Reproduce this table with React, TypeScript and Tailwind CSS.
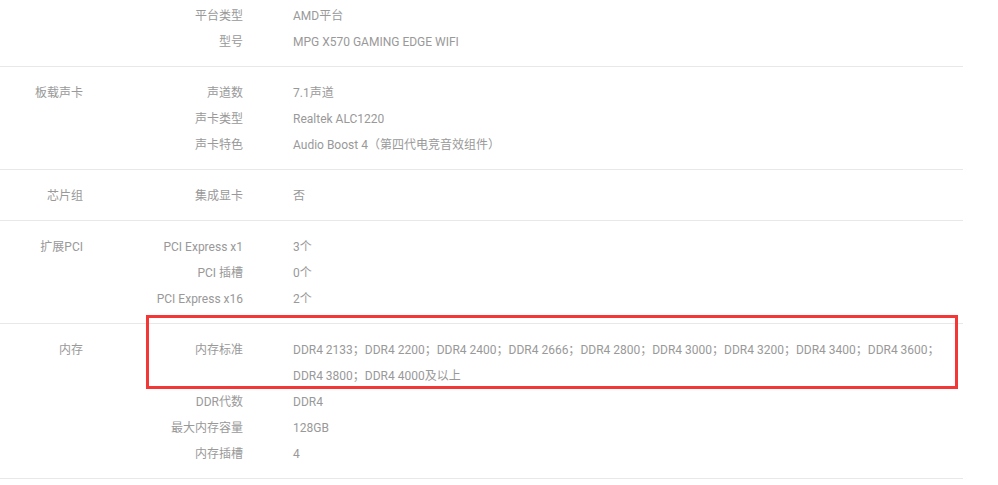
import React from "react";

type Row = { k: string; v: React.ReactNode };
type Section = { group: string; rows: Row[] };

const ddr = [
  "DDR4 2133；",
  "DDR4 2200；",
  "DDR4 2400；",
  "DDR4 2666；",
  "DDR4 2800；",
  "DDR4 3000；",
  "DDR4 3200；",
  "DDR4 3400；",
  "DDR4 3600；",
  "DDR4 3800；",
  "DDR4 4000及以上",
];

const sections: Section[] = [
  {
    group: "",
    rows: [
      { k: "平台类型", v: "AMD平台" },
      { k: "型号", v: "MPG X570 GAMING EDGE WIFI" },
    ],
  },
  {
    group: "板载声卡",
    rows: [
      { k: "声道数", v: "7.1声道" },
      { k: "声卡类型", v: "Realtek ALC1220" },
      { k: "声卡特色", v: "Audio Boost 4（第四代电竞音效组件）" },
    ],
  },
  { group: "芯片组", rows: [{ k: "集成显卡", v: "否" }] },
  {
    group: "扩展PCI",
    rows: [
      { k: "PCI Express x1", v: "3个" },
      { k: "PCI 插槽", v: "0个" },
      { k: "PCI Express x16", v: "2个" },
    ],
  },
  {
    group: "内存",
    rows: [
      {
        k: "内存标准",
        v: (
          <>
            {ddr.map((d, i) => (
              <span key={i} className="whitespace-nowrap">
                {d}
              </span>
            ))}
          </>
        ),
      },
      { k: "DDR代数", v: "DDR4" },
      { k: "最大内存容量", v: "128GB" },
      { k: "内存插槽", v: "4" },
    ],
  },
];

export default function App() {
  return (
    <div
      className="relative w-[963px] bg-white text-[12px] text-[#999]"
      style={{ fontFamily: 'Roboto, "Noto Sans CJK SC", sans-serif' }}
    >
      {sections.map((s, i) => (
        <div
          key={i}
          className={`flex border-b border-[#e8e8e8] ${i === 0 ? "pt-[3px] pb-[11px]" : "pt-[13px] pb-[11px]"}`}
        >
          <div className="w-[83px] shrink-0 text-right leading-[26px]">{s.group}</div>
          <div className="flex flex-col">
            {s.rows.map((r, j) => (
              <div key={j} className="flex leading-[26px]">
                <div className="w-[160px] shrink-0 text-right">{r.k}</div>
                <div className="ml-[50px] w-[655px]">{r.v}</div>
              </div>
            ))}
          </div>
        </div>
      ))}
      <div className="pointer-events-none absolute left-[146px] top-[315px] h-[74px] w-[812px] border-[3px] border-[#f33636]" />
    </div>
  );
}
